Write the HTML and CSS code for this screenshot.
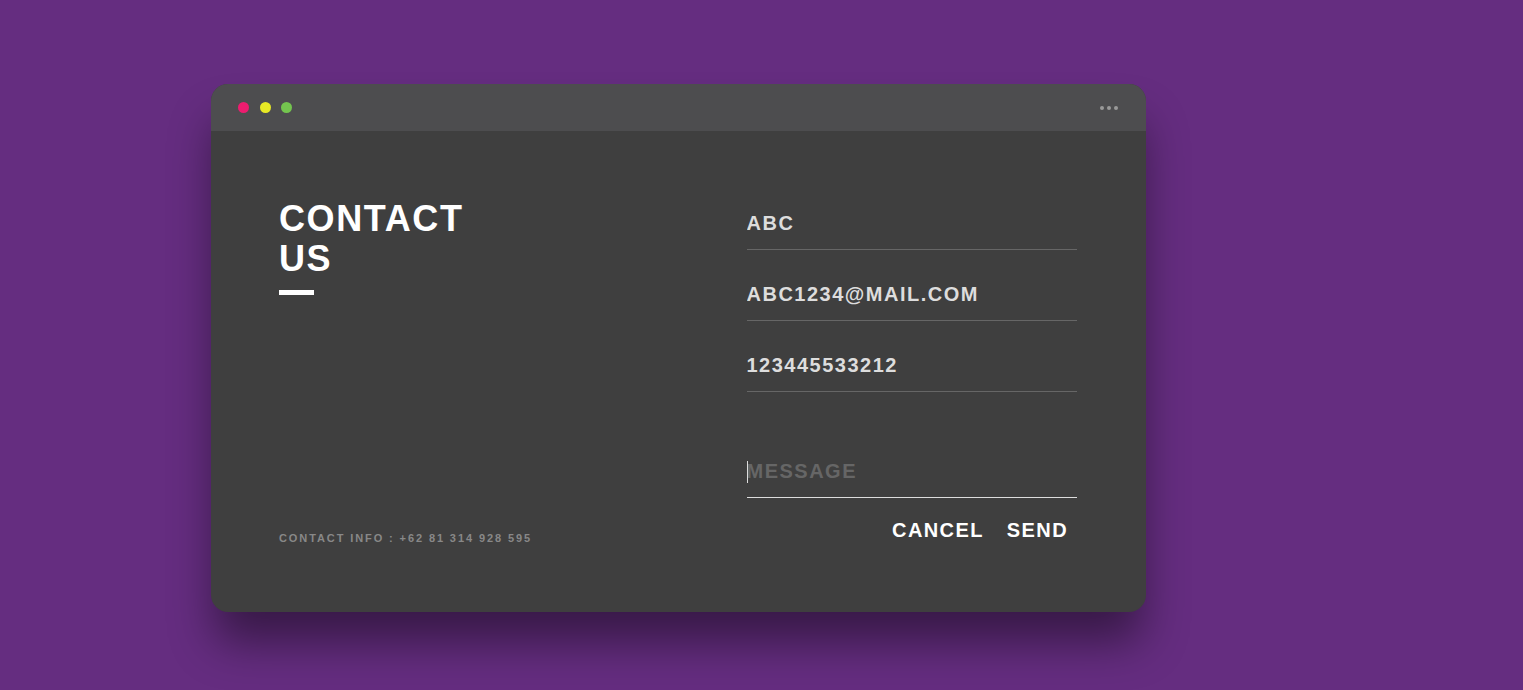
FILE: index.html
```html
<!DOCTYPE html>
<html lang="en">
<head>
<meta charset="utf-8">
<title>Contact Us</title>
<link rel="stylesheet" href="styles.css">
</head>
<body>
  <div class="screen">
    <div class="screen-header">
      <div class="header-left">
        <span class="dot close"></span>
        <span class="dot maximize"></span>
        <span class="dot minimize"></span>
      </div>
      <div class="header-right">
        <span class="ellipsis"></span>
        <span class="ellipsis"></span>
        <span class="ellipsis"></span>
      </div>
    </div>
    <div class="screen-body">
      <div class="body-item left">
        <div class="app-title">
          <span>CONTACT</span>
          <span>US</span>
        </div>
        <div class="app-contact">CONTACT INFO : +62 81 314 928 595</div>
      </div>
      <div class="body-item right">
        <form class="app-form">
          <div class="form-group">
            <input class="form-control" value="ABC">
          </div>
          <div class="form-group">
            <input class="form-control" value="abc1234@mail.com">
          </div>
          <div class="form-group">
            <input class="form-control" value="123445533212">
          </div>
          <div class="form-group message">
            <input class="form-control active" placeholder="MESSAGE">
          </div>
          <div class="form-group buttons">
            <button type="button" class="form-button">CANCEL</button>
            <button type="button" class="form-button">SEND</button>
          </div>
        </form>
      </div>
    </div>
  </div>
</body>
</html>
```
FILE: styles.css
```css
* { box-sizing: border-box; }

html, body {
  margin: 0;
  padding: 0;
}

body {
  background: #652d80;
  font-family: "Liberation Sans", Arial, sans-serif;
  height: 690px;
  overflow: hidden;
  padding-top: 84px;
  padding-left: 211px;
}

.screen {
  width: 935px;
  background: #3f3f3f;
  border-radius: 17px;
  box-shadow: 0 34px 46px -4px rgba(0, 0, 0, 0.45);
}

.screen-header {
  display: flex;
  align-items: center;
  justify-content: space-between;
  height: 47px;
  padding: 0 28px 0 27px;
  background: #4d4d4f;
  border-top-left-radius: 17px;
  border-top-right-radius: 17px;
}

.header-left, .header-right {
  display: flex;
  align-items: center;
}

.dot {
  width: 11px;
  height: 11px;
  border-radius: 50%;
  margin-right: 10.5px;
}

.dot.close { background: #ed1c6f; }
.dot.maximize { background: #e8e925; }
.dot.minimize { background: #74c54f; }

.ellipsis {
  width: 4px;
  height: 4px;
  border-radius: 50%;
  background: #999;
  margin-left: 3px;
}

.screen-body {
  display: flex;
}

.body-item {
  flex: 1;
  padding: 68px;
}

.body-item.left {
  display: flex;
  flex-direction: column;
}

.body-item.right {
  padding: 67px 69px 68px 69px;
}

.app-title {
  display: flex;
  flex-direction: column;
  color: #fff;
  font-size: 36px;
  font-weight: bold;
  line-height: 40px;
  letter-spacing: 1.6px;
}

.app-title::after {
  content: "";
  display: block;
  width: 35px;
  height: 5px;
  margin-top: 11px;
  background: #fff;
}

.app-contact {
  margin-top: auto;
  font-size: 11px;
  font-weight: bold;
  color: #888;
  letter-spacing: 1.9px;
}

.form-group {
  margin-bottom: 19px;
}

.form-group.message {
  position: relative;
  margin-top: 54px;
}

.form-group.message::before {
  content: "";
  position: absolute;
  left: 0;
  top: 15px;
  width: 1px;
  height: 22px;
  background: #ddd;
}

.form-group.buttons {
  margin-bottom: 0;
  margin-top: 20px;
  display: flex;
  justify-content: flex-end;
  gap: 7px;
  margin-right: 1px;
}

.form-control {
  display: block;
  width: 100%;
  padding: 14px 0;
  background: none;
  border: none;
  border-bottom: 1px solid #666;
  color: #ddd;
  font-family: "Liberation Sans", Arial, sans-serif;
  font-size: 20px;
  font-weight: bold;
  line-height: 23px;
  letter-spacing: 1.5px;
  text-transform: uppercase;
  outline: none;
}

.form-control::placeholder {
  color: #666;
}

.form-control.active {
  border-bottom-color: #ddd;
}

.form-button {
  background: none;
  border: none;
  padding: 1px 8px 2px;
  color: #fff;
  font-family: "Liberation Sans", Arial, sans-serif;
  font-size: 20px;
  font-weight: bold;
  line-height: 23px;
  letter-spacing: 1.4px;
  cursor: pointer;
}
```
